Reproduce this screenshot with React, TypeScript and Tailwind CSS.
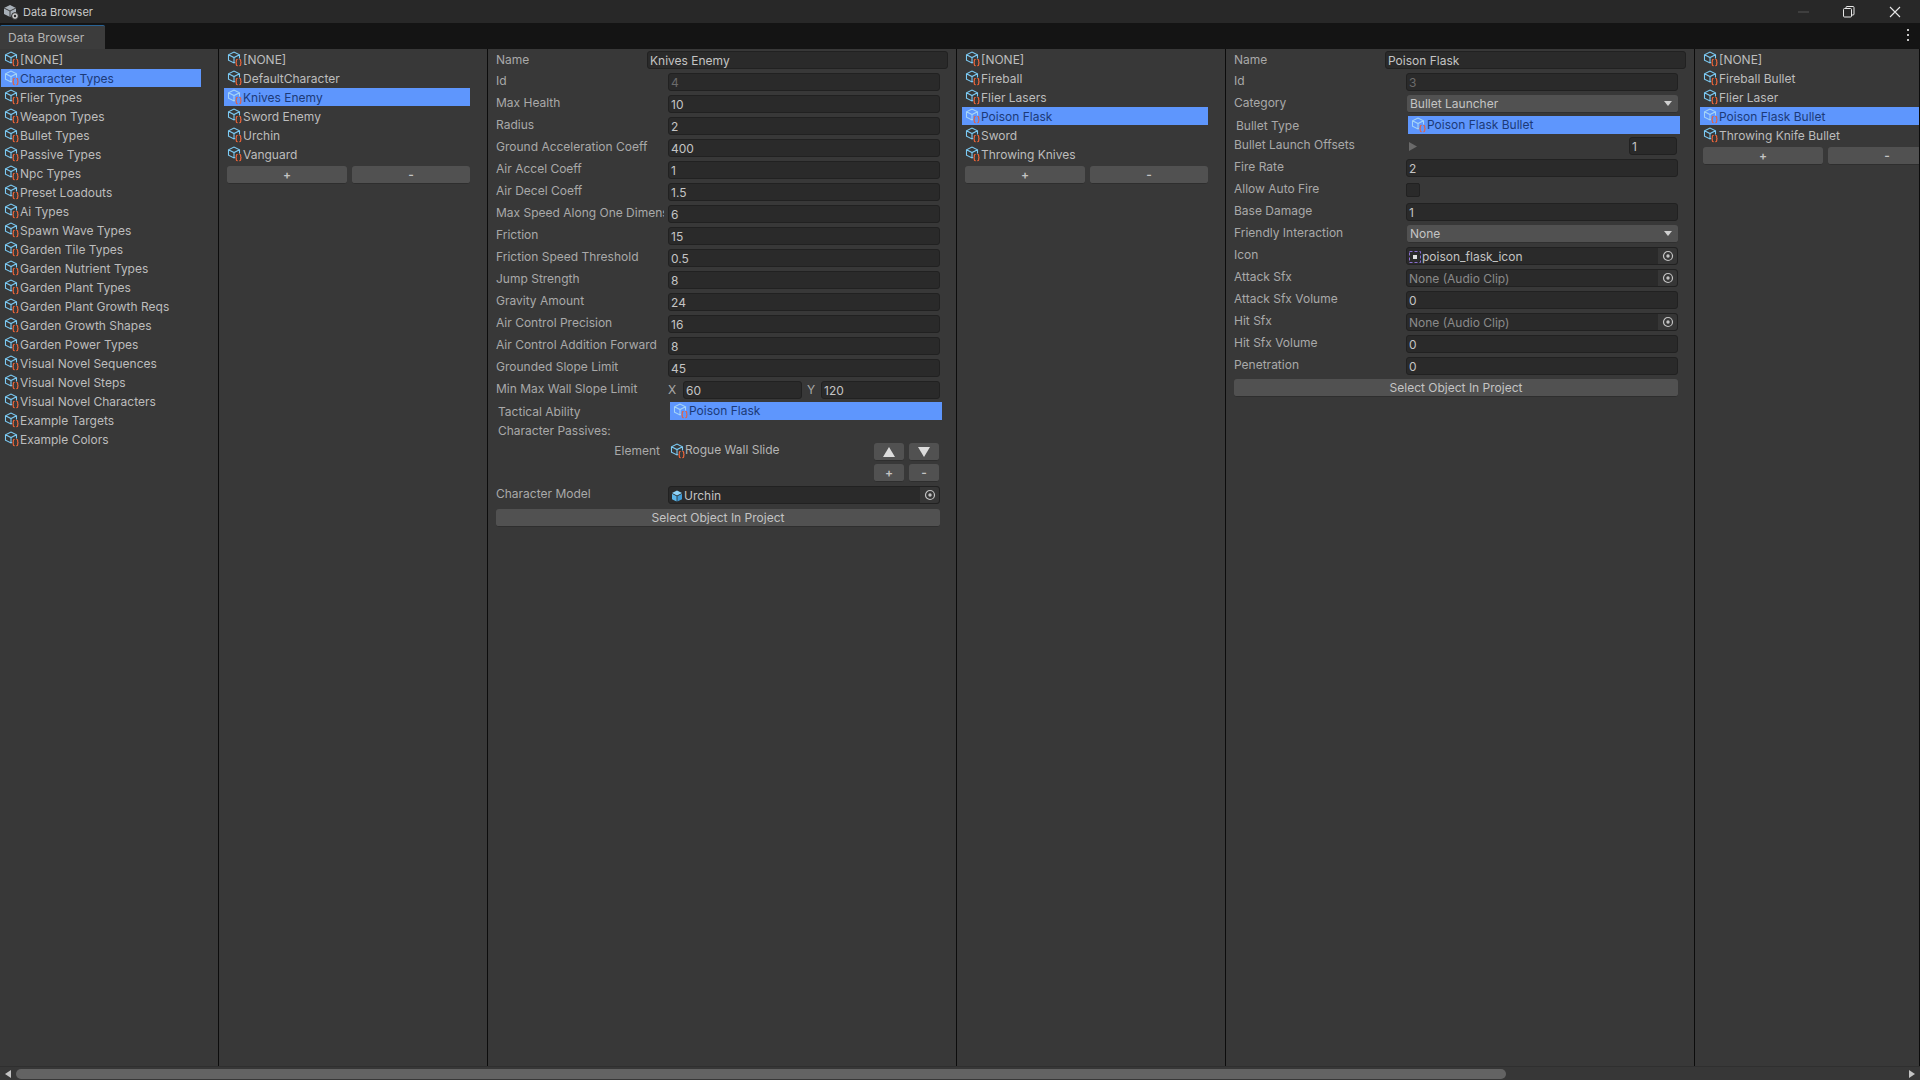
import { ReactNode } from 'react';

const categories = [
  "[NONE]", "Character Types", "Flier Types", "Weapon Types", "Bullet Types", "Passive Types", "Npc Types",
  "Preset Loadouts", "Ai Types", "Spawn Wave Types", "Garden Tile Types", "Garden Nutrient Types", "Garden Plant Types",
  "Garden Plant Growth Reqs", "Garden Growth Shapes", "Garden Power Types", "Visual Novel Sequences", "Visual Novel Steps",
  "Visual Novel Characters", "Example Targets", "Example Colors",
];

// scriptable object icon: cube outline with orange braces
const SoIcon = ({ selected = false }: { selected?: boolean }) => (
  <svg viewBox="0 0 16 16" className="w-4 h-4 shrink-0" fill="none" strokeWidth="1.1">
    <path
      d="M12.5 7.5V3.8L7 1 1.5 3.8V9.2L7 12l1-.5M1.5 3.8 7 6.6l5.5-2.8M7 6.6V12"
      stroke={selected ? "#a5d4f7" : "#7ccbf5"}
    />
    <path
      d="M10.6 8.5H10.2Q9.3 8.5 9.3 9.4V10.8Q9.3 11.6 8.5 11.6 9.3 11.6 9.3 12.4V13.7Q9.3 14.6 10.2 14.6H10.6M12.4 8.5H12.8Q13.7 8.5 13.7 9.4V10.8Q13.7 11.6 14.5 11.6 13.7 11.6 13.7 12.4V13.7Q13.7 14.6 12.8 14.6H12.4"
      stroke={selected ? "#e8603c" : "#f8683a"}
    />
  </svg>
);

const ListRow = ({ name, selected, width }: { name: string; selected: boolean; width: string }) => (
  <div className={`flex items-center h-[18px] pl-[3px] mb-px ${width} ${selected ? "bg-[#5e96fd] text-[#1c3a78]" : "text-[#bdbdbd]"}`}>
    <SoIcon selected={selected} />
    <span className="whitespace-nowrap pt-px">{name}</span>
  </div>
);

const SmallButton = ({ children, className }: { children: ReactNode; className: string }) => (
  <div className={`h-[18px] flex items-center justify-center rounded-[3px] bg-[#515151] border-b border-[#2e2e2e] text-[#c4c4c4] font-semibold ${className}`}>
    {children}
  </div>
);

const ListPanel = ({ items, selected, width, panel }: { items: string[]; selected: string; width: string; panel: string }) => (
  <div className={`${panel} shrink-0 border-r border-[#0c0c0c] pt-px overflow-hidden`}>
    <div className="pl-[5px]">
      {items.map((name) => (
        <ListRow key={name} name={name} selected={name === selected} width={width} />
      ))}
      <div className="flex gap-[5px] pl-[3px] mt-[3px] w-[246px]">
        <SmallButton className="w-[120px] shrink-0">+</SmallButton>
        <SmallButton className="w-[118px] shrink-0">-</SmallButton>
      </div>
    </div>
  </div>
);

const Label = ({ children, className = "w-[168px] mr-1 leading-[16px]" }: { children: ReactNode; className?: string }) => (
  <div className={`shrink-0 overflow-hidden whitespace-nowrap text-[#a9a9a9] ${className}`}>{children}</div>
);

const Field = ({ value, dim = false, width = "w-[272px]" }: { value: string; dim?: boolean; width?: string }) => (
  <div className={`${width} h-[18px] shrink-0 flex items-center pl-[2px] pt-px rounded-[3px] bg-[#2a2a2a] border border-[#212121] ${dim ? "text-[#6b6b6b]" : "text-[#c4c4c4]"}`}>
    {value}
  </div>
);

const Row = ({ label, value, dim }: { label: string; value: string; dim?: boolean }) => (
  <div className="flex h-[18px] mb-1">
    <Label>{label}</Label>
    <Field value={value} dim={dim} />
  </div>
);

const NameRow = ({ value }: { value: string }) => (
  <div className="flex h-[18px] mb-1">
    <Label className="w-[151px] leading-[18px]">Name</Label>
    <Field value={value} width="w-[301px]" />
  </div>
);

const Dropdown = ({ label, value, className = "mb-1" }: { label: string; value: string; className?: string }) => (
  <div className={`flex h-[18px] ${className}`}>
    <Label>{label}</Label>
    <div className="w-[271px] h-[18px] ml-px shrink-0 flex items-center justify-between pl-[3px] pr-[6px] rounded-[3px] bg-[#515151] border-b border-[#303030] text-[#c4c4c4]">
      {value}
      <svg viewBox="0 0 8 5" className="w-2 h-[5px]"><path d="M0 0H8L4 5Z" fill="#d0d0d0" /></svg>
    </div>
  </div>
);

const PickerDot = () => (
  <div className="w-[19px] h-full shrink-0 flex items-center justify-center bg-[#363636] rounded-r-[3px]">
    <svg viewBox="0 0 12 12" className="w-3 h-3" fill="none">
      <circle cx="6" cy="6" r="4.5" stroke="#c4c4c4" strokeWidth="1.2" />
      <circle cx="6" cy="6" r="1.7" fill="#c4c4c4" />
    </svg>
  </div>
);

const ObjectRow = ({ label, value, icon, dim, className = "mb-1" }: { label: string; value: string; icon?: ReactNode; dim?: boolean; className?: string }) => (
  <div className={`flex h-[18px] ${className}`}>
    <Label>{label}</Label>
    <div className={`w-[272px] h-[18px] shrink-0 flex items-center rounded-[3px] bg-[#2a2a2a] border border-[#212121] ${dim ? "text-[#8a8a8a]" : "text-[#c4c4c4]"}`}>
      <div className="flex-1 flex items-center gap-px pl-[2px] pt-px min-w-0">
        {icon}
        {value}
      </div>
      <PickerDot />
    </div>
  </div>
);

const SelectedObject = ({ label, value, className }: { label: string; value: string; className: string }) => (
  <div className={`flex h-[18px] ${className}`}>
    <div className="w-[170px] mr-1 pl-[2px] shrink-0 leading-[20px] text-[#a9a9a9]">{label}</div>
    <div className="w-[272px] h-[18px] shrink-0 flex items-center pl-[3px] bg-[#5e96fd] text-[#1c3a78]">
      <SoIcon selected />
      {value}
    </div>
  </div>
);

const ProjectButton = () => (
  <div className="w-[444px] h-[18px] flex items-center justify-center rounded-[3px] bg-[#515151] border-b border-[#2e2e2e] text-[#c4c4c4]">
    Select Object In Project
  </div>
);

const ArrowButton = ({ up }: { up: boolean }) => (
  <SmallButton className="w-[30px]">
    <svg viewBox="0 0 12 10" className="w-3 h-[10px]">
      <path d={up ? "M6 0 12 10H0Z" : "M0 0H12L6 10Z"} fill="#dcdcdc" />
    </svg>
  </SmallButton>
);

const UrchinIcon = () => (
  <svg viewBox="0 0 12 12" className="w-3 h-3 shrink-0">
    <path d="M6 .5 11 3 6 5.5 1 3Z" fill="#8fd3f8" />
    <path d="M1 3.8 5.6 6.2V11.6L1 9.2Z" fill="#5bb6ea" />
    <path d="M11 3.8 6.4 6.2V11.6L11 9.2Z" fill="#3f9ad4" />
  </svg>
);

const SpriteIcon = () => (
  <svg viewBox="0 0 12 12" className="w-3 h-3 shrink-0" fill="none">
    <rect x=".5" y=".5" width="11" height="11" stroke="#8a6fd0" strokeDasharray="3 2" />
    <rect x="4" y="4" width="4" height="4" fill="#e0e0e0" />
  </svg>
);

const HeaderCube = () => (
  <svg viewBox="0 0 16 16" className="w-4 h-4 shrink-0">
    <path d="M7 1 13 4V10L7 13 1 10V4Z" fill="#a8b0b8" />
    <path d="M1 4 7 7 13 4M7 7V13" stroke="#3a3a3a" strokeWidth="1" fill="none" />
    <circle cx="12" cy="12" r="3.4" fill="#c8c8c8" stroke="#282828" />
    <circle cx="12" cy="12" r="1.2" fill="#282828" />
  </svg>
);

export default function App() {
  return (
    <div className="w-[1920px] h-screen flex flex-col overflow-hidden bg-[#383838] text-[12px] font-['Inter',sans-serif]">
      <div className="h-[23px] shrink-0 flex items-center bg-[#282828] pl-[3px] text-[11px] text-[#c8c8c8]">
        <HeaderCube />
        <span className="ml-1 pt-px">Data Browser</span>
        <div className="ml-auto flex items-center">
          <svg viewBox="0 0 12 12" className="w-3 h-3" fill="none"><path d="M0 6H11" stroke="#555" /></svg>
          <svg viewBox="0 0 12 12" className="w-3 h-3 ml-[33px]" fill="none">
            <rect x=".5" y="2.5" width="8" height="8.5" rx="1" stroke="#e8e8e8" />
            <path d="M3 2.5V1.5Q3 .5 4 .5H10Q11 .5 11 1.5V8Q11 9 10 9H8.5" stroke="#e8e8e8" />
          </svg>
          <svg viewBox="0 0 12 12" className="w-3 h-3 ml-[34px] mr-[19px]" fill="none">
            <path d="M1 1 11 11M11 1 1 11" stroke="#e8e8e8" strokeWidth="1.1" />
          </svg>
        </div>
      </div>

      <div className="h-[26px] shrink-0 flex items-end justify-between bg-[#141414]">
        <div className="w-[105px] h-[24px] flex items-center pl-2 bg-[#3c3c3c] border-t border-[#2a6496] rounded-t-[2px] text-[#b4b4b4]">
          Data Browser
        </div>
        <svg viewBox="0 0 4 12" className="w-1 h-3 mb-2 mr-[10px]">
          <rect x="1" y="0" width="2" height="2" fill="#c4c4c4" />
          <rect x="1" y="5" width="2" height="2" fill="#c4c4c4" />
          <rect x="1" y="10" width="2" height="2" fill="#c4c4c4" />
        </svg>
      </div>

      <div className="flex-1 flex min-h-0">
        <div className="w-[219px] shrink-0 border-r border-[#0c0c0c] pt-px pl-px">
          {categories.map((name) => (
            <ListRow key={name} name={name} selected={name === "Character Types"} width="w-[200px]" />
          ))}
        </div>

        <ListPanel
          panel="w-[269px]"
          width="w-[246px]"
          selected="Knives Enemy"
          items={["[NONE]", "DefaultCharacter", "Knives Enemy", "Sword Enemy", "Urchin", "Vanguard"]}
        />

        <div className="w-[469px] shrink-0 border-r border-[#0c0c0c] pl-2 pt-[2px]">
          <NameRow value="Knives Enemy" />
          <Row label="Id" value="4" dim />
          <Row label="Max Health" value="10" />
          <Row label="Radius" value="2" />
          <Row label="Ground Acceleration Coeff" value="400" />
          <Row label="Air Accel Coeff" value="1" />
          <Row label="Air Decel Coeff" value="1.5" />
          <Row label="Max Speed Along One Dimension" value="6" />
          <Row label="Friction" value="15" />
          <Row label="Friction Speed Threshold" value="0.5" />
          <Row label="Jump Strength" value="8" />
          <Row label="Gravity Amount" value="24" />
          <Row label="Air Control Precision" value="16" />
          <Row label="Air Control Addition Forward" value="8" />
          <Row label="Grounded Slope Limit" value="45" />
          <div className="flex h-[18px] mb-[3px]">
            <Label>Min Max Wall Slope Limit</Label>
            <span className="w-[15px] shrink-0 leading-[18px] text-[#a9a9a9]">X</span>
            <Field value="60" width="w-[119px]" />
            <span className="w-[19px] shrink-0 pl-[5px] leading-[18px] text-[#a9a9a9]">Y</span>
            <Field value="120" width="w-[119px]" />
          </div>
          <SelectedObject label="Tactical Ability" value="Poison Flask" className="mb-px" />
          <div className="h-[18px] mb-1 pl-[2px] leading-[20px] text-[#a9a9a9]">Character Passives:</div>
          <div className="flex w-[444px] h-[39px] mb-1">
            <div className="w-[164px] shrink-0 text-right leading-[15px] text-[#a9a9a9]">Element</div>
            <div className="flex items-start h-[17px] pl-[10px] leading-[14px] text-[#b4b4b4]">
              <SoIcon />
              <span className="-ml-px">Rogue Wall Slide</span>
            </div>
            <div className="ml-auto grid grid-cols-2 gap-x-[5px] gap-y-[3px] h-[39px] w-[65px] mr-px">
              <ArrowButton up />
              <ArrowButton up={false} />
              <SmallButton className="w-[30px]">+</SmallButton>
              <SmallButton className="w-[30px]">-</SmallButton>
            </div>
          </div>
          <ObjectRow label="Character Model" value="Urchin" icon={<UrchinIcon />} className="mb-[5px]" />
          <ProjectButton />
        </div>

        <ListPanel
          panel="w-[269px]"
          width="w-[246px]"
          selected="Poison Flask"
          items={["[NONE]", "Fireball", "Flier Lasers", "Poison Flask", "Sword", "Throwing Knives"]}
        />

        <div className="w-[469px] shrink-0 border-r border-[#0c0c0c] pl-2 pt-[2px]">
          <NameRow value="Poison Flask" />
          <Row label="Id" value="3" dim />
          <Dropdown label="Category" value="Bullet Launcher" className="mb-[3px]" />
          <SelectedObject label="Bullet Type" value="Poison Flask Bullet" className="mb-[3px]" />
          <div className="flex h-[18px] mb-1">
            <Label>Bullet Launch Offsets</Label>
            <svg viewBox="0 0 8 9" className="w-2 h-[9px] mt-[5px] ml-[3px]"><path d="M0 0 8 4.5 0 9Z" fill="#6a6a6a" /></svg>
            <div className="ml-auto mr-[17px]">
              <Field value="1" width="w-[48px]" />
            </div>
          </div>
          <Row label="Fire Rate" value="2" />
          <div className="flex h-[18px] mb-1">
            <Label>Allow Auto Fire</Label>
            <div className="w-[14px] h-[14px] mt-[2px] rounded-[2px] bg-[#2a2a2a] border border-[#212121]" />
          </div>
          <Row label="Base Damage" value="1" />
          <Dropdown label="Friendly Interaction" value="None" />
          <ObjectRow label="Icon" value="poison_flask_icon" icon={<SpriteIcon />} />
          <ObjectRow label="Attack Sfx" value="None (Audio Clip)" dim />
          <Row label="Attack Sfx Volume" value="0" />
          <ObjectRow label="Hit Sfx" value="None (Audio Clip)" dim />
          <Row label="Hit Sfx Volume" value="0" />
          <Row label="Penetration" value="0" />
          <ProjectButton />
        </div>

        <ListPanel
          panel="flex-1 min-w-0"
          width="w-[246px]"
          selected="Poison Flask Bullet"
          items={["[NONE]", "Fireball Bullet", "Flier Laser", "Poison Flask Bullet", "Throwing Knife Bullet"]}
        />
      </div>

      <div className="h-[14px] shrink-0 flex items-center bg-[#373737] border-t border-[#2f2f2f]">
        <svg viewBox="0 0 6 8" className="w-[6px] h-2 ml-[5px]"><path d="M6 0V8L0 4Z" fill="#c4c4c4" /></svg>
        <div className="w-[1490px] h-[10px] ml-[5px] rounded-full bg-[#636363]" />
        <svg viewBox="0 0 6 8" className="w-[6px] h-2 ml-auto mr-[5px]"><path d="M0 0V8L6 4Z" fill="#c4c4c4" /></svg>
      </div>
    </div>
  );
}
